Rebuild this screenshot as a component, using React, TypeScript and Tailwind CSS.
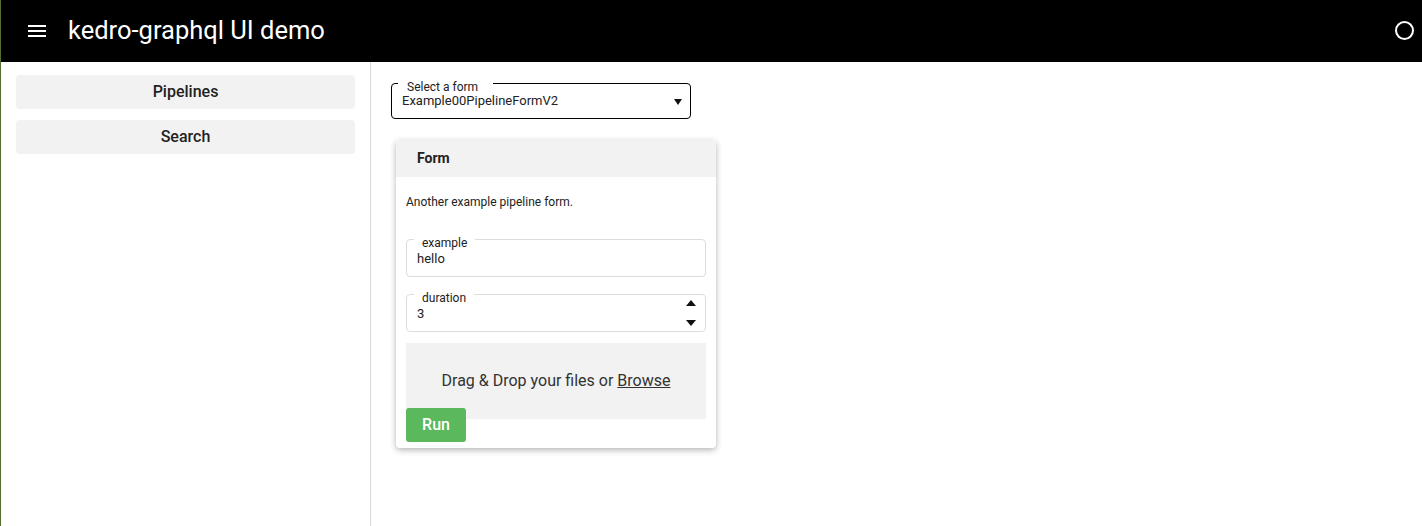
import React from "react";

export default function App() {
  return (
    <div className="w-[1422px] h-[526px] flex flex-col bg-white border-l border-[#556b2f] overflow-hidden" style={{ fontFamily: "Roboto, 'Noto Sans', sans-serif" }}>
      <header className="h-[62px] shrink-0 bg-black flex items-center text-white">
        <div className="ml-[27px] w-[18px] flex flex-col gap-[3px]">
          <div className="h-[2px] bg-white" />
          <div className="h-[2px] bg-white" />
          <div className="h-[2px] bg-white" />
        </div>
        <div className="ml-[22px] text-[25.5px] leading-none -mt-[1px]">kedro-graphql UI demo</div>
        <div className="ml-auto mr-[8px] -mt-[1px] w-[19px] h-[19px] rounded-full border-2 border-white" />
      </header>
      <div className="flex flex-1 min-h-0">
        <aside className="w-[370px] shrink-0 border-r border-[#d9d9d9] px-[15px] pt-[13px] flex flex-col gap-[11px]">
          <div className="h-[34px] rounded-[4px] bg-[#f2f2f2] flex items-center justify-center text-[16px] font-medium text-[#222]">Pipelines</div>
          <div className="h-[34px] rounded-[4px] bg-[#f2f2f2] flex items-center justify-center text-[16px] font-medium text-[#222]">Search</div>
        </aside>
        <main className="flex-1 pl-[20px] pt-[11px]">
          <fieldset className="w-[300px] h-[46px] border border-black rounded-[4px] pl-[10px] pr-[8px]">
            <legend className="text-[12px] leading-[12px] pt-[8px] pl-[9px] pr-[15px] -ml-[4px] text-[#222]">Select a form</legend>
            <div className="flex items-center justify-between text-[13px] text-[#222] leading-[16px]">
              <span>Example00PipelineFormV2</span>
              <svg width="8" height="6" viewBox="0 0 8 6" className="mt-[1px]"><path d="M0 0 L8 0 L4 6 Z" fill="#111" /></svg>
            </div>
          </fieldset>
          <div className="mt-[21px] ml-[5px] w-[320px] h-[308px] rounded-[4px] bg-white shadow-[0_2px_6px_rgba(0,0,0,0.3)] flex flex-col overflow-hidden">
            <div className="h-[37px] shrink-0 bg-[#f2f2f2] flex items-center pl-[21px] text-[14px] font-bold text-[#222]">Form</div>
            <div className="px-[10px]">
              <div className="mt-[18px] text-[12px] text-[#222] leading-[14px]">Another example pipeline form.</div>
              <fieldset className="mt-[20px] h-[48px] border border-[#dcdcdc] rounded-[4px] px-[10px]">
                <legend className="text-[12px] leading-[12px] pt-[8px] px-[8px] -ml-[3px] text-[#222]">example</legend>
                <div className="mt-[2px] text-[13px] leading-[16px] text-[#222]">hello</div>
              </fieldset>
              <fieldset className="mt-[7px] h-[48px] border border-[#dcdcdc] rounded-[4px] pl-[10px] pr-[9px]">
                <legend className="text-[12px] leading-[12px] pt-[8px] px-[8px] -ml-[3px] text-[#222]">duration</legend>
                <div className="flex items-start justify-between">
                  <div className="mt-[2px] text-[13px] leading-[16px] text-[#222]">3</div>
                  <div className="-mt-[4px] flex flex-col gap-[14px]">
                    <svg width="10" height="6" viewBox="0 0 10 6"><path d="M0 6 L5 0 L10 6 Z" fill="#111" /></svg>
                    <svg width="10" height="6" viewBox="0 0 10 6"><path d="M0 0 L5 6 L10 0 Z" fill="#111" /></svg>
                  </div>
                </div>
              </fieldset>
              <div className="mt-[11px] h-[76px] bg-[#f2f2f2] flex items-center justify-center text-[16px] text-[#333]">
                <span>Drag &amp; Drop your files or <span className="underline">Browse</span></span>
              </div>
              <div className="-mt-[11px] w-[60px] h-[34px] rounded-[3px] bg-[#5cb85c] text-white text-[16px] font-medium flex items-center justify-center relative">Run</div>
            </div>
          </div>
        </main>
      </div>
    </div>
  );
}
